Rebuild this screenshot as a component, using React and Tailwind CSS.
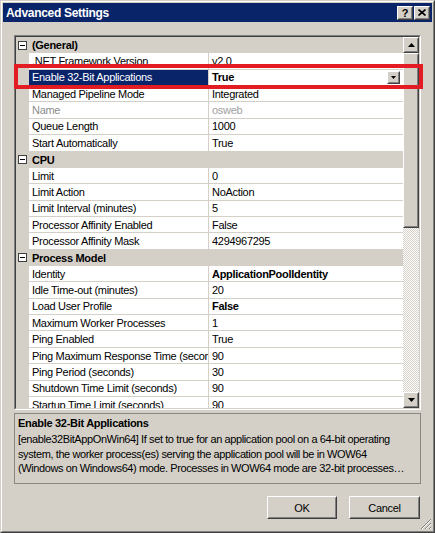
import React from "react";

const rows = [
  { cat: "(General)" },
  { n: ".NET Framework Version", v: "v2.0" },
  { n: "Enable 32-Bit Applications", v: "True", sel: true, bold: true },
  { n: "Managed Pipeline Mode", v: "Integrated" },
  { n: "Name", v: "osweb", dis: true },
  { n: "Queue Length", v: "1000" },
  { n: "Start Automatically", v: "True" },
  { cat: "CPU" },
  { n: "Limit", v: "0" },
  { n: "Limit Action", v: "NoAction" },
  { n: "Limit Interval (minutes)", v: "5" },
  { n: "Processor Affinity Enabled", v: "False" },
  { n: "Processor Affinity Mask", v: "4294967295" },
  { cat: "Process Model" },
  { n: "Identity", v: "ApplicationPoolIdentity", bold: true },
  { n: "Idle Time-out (minutes)", v: "20" },
  { n: "Load User Profile", v: "False", bold: true },
  { n: "Maximum Worker Processes", v: "1" },
  { n: "Ping Enabled", v: "True" },
  { n: "Ping Maximum Response Time (seconds)", v: "90" },
  { n: "Ping Period (seconds)", v: "30" },
  { n: "Shutdown Time Limit (seconds)", v: "90" },
  { n: "Startup Time Limit (seconds)", v: "90" },
];

function Raised({ className = "", children }) {
  return (
    <div className={"border border-t-white border-l-white border-r-[#404040] border-b-[#404040] bg-[#d4d0c8] " + className}>
      <div className="w-full h-full border border-t-[#d4d0c8] border-l-[#d4d0c8] border-r-[#808080] border-b-[#808080] flex items-center justify-center">
        {children}
      </div>
    </div>
  );
}

function Tri({ down }) {
  return (
    <svg width="7" height="4" viewBox="0 0 7 4" className="block">
      {down ? <path d="M0 0h7L3.5 4z" fill="#000" /> : <path d="M0 4h7L3.5 0z" fill="#000" />}
    </svg>
  );
}

function Row({ r }) {
  if (r.cat) {
    return (
      <div className="flex shrink-0 h-[16.36px] items-center bg-[#d4d0c8]">
        <div className="w-[13px] flex items-center justify-start pl-[2px]">
          <div className="w-[9px] h-[9px] border border-[#404040] bg-white flex items-center justify-center">
            <div className="w-[5px] h-px bg-black" />
          </div>
        </div>
        <div className="pl-[3px] font-bold text-black">{r.cat}</div>
      </div>
    );
  }
  return (
    <div className="flex shrink-0 h-[16.36px]">
      <div className="w-[13px] bg-[#d4d0c8] shrink-0" />
      <div
        className={
          "w-[180px] shrink-0 border-r border-r-[#d4d0c8] border-b border-b-[#d4d0c8] pl-[3px] flex items-center overflow-hidden whitespace-nowrap " +
          (r.sel ? "bg-[#0a246a] text-white" : r.dis ? "bg-white text-[#8c8c8c]" : "bg-white text-black")
        }
      >
        {r.n}
      </div>
      <div
        className={
          "flex-1 min-w-0 bg-white border-b border-b-[#d4d0c8] pl-[3px] flex items-center justify-between overflow-hidden whitespace-nowrap " +
          (r.dis ? "text-[#a0a0a0]" : "text-black") +
          (r.bold ? " font-bold" : "")
        }
      >
        <span>{r.v}</span>
        {r.sel && (
          <Raised className="w-[13px] h-[13px] mr-[3px] shrink-0">
            <svg width="5" height="3" viewBox="0 0 5 3" className="block">
              <path d="M0 0h5L2.5 3z" fill="#000" />
            </svg>
          </Raised>
        )}
      </div>
    </div>
  );
}

export default function App() {
  return (
    <div className="w-[435px] h-[533px] relative overflow-hidden bg-white font-['Liberation_Sans',Arial,sans-serif] text-[11px] tracking-[-0.3px] leading-[14px]">
      <div className="w-full h-full border border-t-[#d4d0c8] border-l-[#d4d0c8] border-r-[#404040] border-b-[#404040]">
        <div className="w-full h-full border border-t-white border-l-white border-r-[#808080] border-b-[#808080] bg-[#d4d0c8] p-px flex flex-col">
          {/* Title bar */}
          <div className="h-[19px] bg-[#0a246a] flex items-center justify-between pl-[3px] pr-[2px]">
            <span className="text-white font-bold text-[12px] tracking-[-0.3px]">Advanced Settings</span>
            <div className="flex items-center gap-0">
              <Raised className="w-[16px] h-[14px]">
                <span className="text-black font-bold text-[11px] leading-none mt-px">?</span>
              </Raised>
              <Raised className="w-[16px] h-[14px] ml-px">
                <svg width="8" height="7" viewBox="0 0 8 7" className="block">
                  <path d="M0.5 0.5L7.5 6.5M7.5 0.5L0.5 6.5" stroke="#000" strokeWidth="1.6" />
                </svg>
              </Raised>
            </div>
          </div>

          {/* Content */}
          <div className="flex flex-col pl-[11px]">
            {/* Property grid */}
            <div className="mt-[13px] w-[407px] h-[375px] border border-t-[#808080] border-l-[#808080] border-r-white border-b-white">
              <div className="w-full h-full border border-t-[#404040] border-l-[#404040] border-r-[#d4d0c8] border-b-[#d4d0c8] flex bg-[#d4d0c8]">
                <div className="w-[387px] h-full overflow-hidden flex flex-col">
                  {rows.map((r, i) => (
                    <Row key={i} r={r} />
                  ))}
                </div>
                <div className="w-[16px] h-full flex flex-col">
                  <Raised className="w-[16px] h-[16px] shrink-0">
                    <Tri />
                  </Raised>
                  <Raised className="w-[16px] h-[175px] shrink-0" />
                  <div className="flex-1 bg-[repeating-conic-gradient(#d4d0c8_0_25%,#ffffff_0_50%)] bg-[length:2px_2px]" />
                  <Raised className="w-[16px] h-[16px] shrink-0">
                    <Tri down />
                  </Raised>
                </div>
              </div>
            </div>

            {/* Description */}
            <div className="mt-[3px] w-[407px] h-[71px] border border-[#8a8883] px-[3px] pt-[2px] text-black overflow-hidden">
              <div className="font-bold leading-[15px]">Enable 32-Bit Applications</div>
              <div className="leading-[14.5px] mt-px tracking-[-0.4px] whitespace-nowrap">
                [enable32BitAppOnWin64] If set to true for an application pool on a 64-bit operating
                <br />
                system, the worker process(es) serving the application pool will be in WOW64
                <br />
                (Windows on Windows64) mode. Processes in WOW64 mode are 32-bit processes…
              </div>
            </div>

            {/* Buttons */}
            <div className="mt-[12px] w-[406px] flex justify-end gap-[12px]">
              <Raised className="w-[70px] h-[23px]">
                <span className="text-black">OK</span>
              </Raised>
              <Raised className="w-[71px] h-[23px]">
                <span className="text-black">Cancel</span>
              </Raised>
            </div>
          </div>
        </div>
      </div>

      {/* Red highlight box */}
      <div className="absolute left-[14px] top-[64px] w-[409px] h-[25px] border-[4px] border-[#e31b23]" />

      {/* Resize grip */}
      <svg className="absolute right-[3px] bottom-[3px]" width="12" height="12" viewBox="0 0 12 12">
        <path d="M11 1L1 11M11 5L5 11M11 9L9 11" stroke="#808080" strokeWidth="1" />
        <path d="M11 2L2 11M11 6L6 11M11 10L10 11" stroke="#ffffff" strokeWidth="1" />
      </svg>
    </div>
  );
}
